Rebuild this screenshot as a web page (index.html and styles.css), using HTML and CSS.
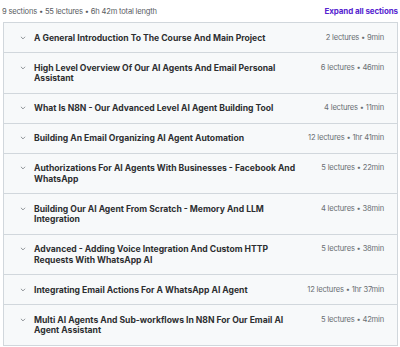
FILE: index.html
```html
<!DOCTYPE html>
<html lang="en">
<head>
  <meta charset="UTF-8" />
  <title>Course content</title>
  <link rel="stylesheet" href="styles.css">
</head>
<body>

  <div class="curriculum">
    <div class="curriculum-header">
      <span class="summary">9 sections • 55 lectures • 6h 42m total length</span>
      <button class="expand-all">Expand all sections</button>
    </div>

    <div class="sections">
      <div class="section">
        <span class="chevron"><svg viewBox="0 0 10 10" width="6" height="6"><path d="M1.5 3 L5 6.5 L8.5 3" fill="none" stroke="#6a6f73" stroke-width="1.2"/></svg></span>
        <span class="title">A General Introduction To The Course And Main Project</span>
        <span class="meta">2 lectures • 9min</span>
      </div>
      <div class="section">
        <span class="chevron"><svg viewBox="0 0 10 10" width="6" height="6"><path d="M1.5 3 L5 6.5 L8.5 3" fill="none" stroke="#6a6f73" stroke-width="1.2"/></svg></span>
        <span class="title">High Level Overview Of Our AI Agents And Email Personal Assistant</span>
        <span class="meta">6 lectures • 46min</span>
      </div>
      <div class="section">
        <span class="chevron"><svg viewBox="0 0 10 10" width="6" height="6"><path d="M1.5 3 L5 6.5 L8.5 3" fill="none" stroke="#6a6f73" stroke-width="1.2"/></svg></span>
        <span class="title">What Is N8N - Our Advanced Level AI Agent Building Tool</span>
        <span class="meta">4 lectures • 11min</span>
      </div>
      <div class="section">
        <span class="chevron"><svg viewBox="0 0 10 10" width="6" height="6"><path d="M1.5 3 L5 6.5 L8.5 3" fill="none" stroke="#6a6f73" stroke-width="1.2"/></svg></span>
        <span class="title">Building An Email Organizing AI Agent Automation</span>
        <span class="meta">12 lectures • 1hr 41min</span>
      </div>
      <div class="section">
        <span class="chevron"><svg viewBox="0 0 10 10" width="6" height="6"><path d="M1.5 3 L5 6.5 L8.5 3" fill="none" stroke="#6a6f73" stroke-width="1.2"/></svg></span>
        <span class="title">Authorizations For AI Agents With Businesses - Facebook And WhatsApp</span>
        <span class="meta">5 lectures • 22min</span>
      </div>
      <div class="section">
        <span class="chevron"><svg viewBox="0 0 10 10" width="6" height="6"><path d="M1.5 3 L5 6.5 L8.5 3" fill="none" stroke="#6a6f73" stroke-width="1.2"/></svg></span>
        <span class="title">Building Our AI Agent From Scratch - Memory And LLM Integration</span>
        <span class="meta">4 lectures • 38min</span>
      </div>
      <div class="section">
        <span class="chevron"><svg viewBox="0 0 10 10" width="6" height="6"><path d="M1.5 3 L5 6.5 L8.5 3" fill="none" stroke="#6a6f73" stroke-width="1.2"/></svg></span>
        <span class="title">Advanced - Adding Voice Integration And Custom HTTP Requests With WhatsApp AI</span>
        <span class="meta">5 lectures • 38min</span>
      </div>
      <div class="section">
        <span class="chevron"><svg viewBox="0 0 10 10" width="6" height="6"><path d="M1.5 3 L5 6.5 L8.5 3" fill="none" stroke="#6a6f73" stroke-width="1.2"/></svg></span>
        <span class="title">Integrating Email Actions For A WhatsApp AI Agent</span>
        <span class="meta">12 lectures • 1hr 37min</span>
      </div>
      <div class="section">
        <span class="chevron"><svg viewBox="0 0 10 10" width="6" height="6"><path d="M1.5 3 L5 6.5 L8.5 3" fill="none" stroke="#6a6f73" stroke-width="1.2"/></svg></span>
        <span class="title">Multi AI Agents And Sub-workflows In N8N For Our Email AI Agent Assistant</span>
        <span class="meta">5 lectures • 42min</span>
      </div>
    </div>
  </div>

</body>
</html>
```

FILE: styles.css
```css
body {
  font-family: Inter, 'Liberation Sans', sans-serif;
  background-color: #fff;
  color: #2d2f31;
  margin: 0;
  padding: 0;
}

.curriculum {
  padding: 4px 2px 0 2px;
}

.curriculum-header {
  display: flex;
  justify-content: space-between;
  align-items: center;
  height: 14px;
  margin-bottom: 4px;
}

.summary {
  font-size: 7.6px;
  letter-spacing: -0.2px;
  color: #595c5f;
}

.expand-all {
  background: none;
  border: none;
  padding: 0;
  font-family: inherit;
  font-size: 8px;
  font-weight: 700;
  letter-spacing: -0.1px;
  color: #5624d0;
  cursor: pointer;
}

.sections {
  margin-left: 1px;
  border: 1px solid #d1d7dc;
  background-color: #f7f9fa;
}

.section {
  display: flex;
  align-items: flex-start;
  padding: 9.5px 13px 9px 16px;
  border-bottom: 1px solid #d1d7dc;
}

.section:last-child {
  border-bottom: none;
}

.chevron {
  flex: 0 0 14px;
  height: 10.5px;
  display: flex;
  align-items: center;
}

.title {
  flex: 1;
  font-size: 8.6px;
  font-weight: 700;
  line-height: 10.5px;
  padding-right: 10px;
}

.meta {
  flex-shrink: 0;
  min-width: 70px;
  text-align: right;
  font-size: 7.6px;
  letter-spacing: -0.2px;
  line-height: 10.5px;
  color: #6a6f73;
  white-space: nowrap;
}
```
